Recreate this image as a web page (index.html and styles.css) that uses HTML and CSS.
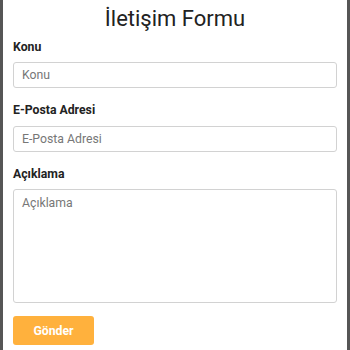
FILE: index.html
```html
<!DOCTYPE html>
<html lang="tr">
<head>
<meta charset="utf-8">
<link rel="stylesheet" href="styles.css">
</head>
<body>
<div class="page">
  <h1 class="title">İletişim Formu</h1>
  <form class="form">
    <label class="label" for="konu">Konu</label>
    <input class="field" id="konu" type="text" placeholder="Konu">
    <label class="label" for="email">E-Posta Adresi</label>
    <input class="field" id="email" type="email" placeholder="E-Posta Adresi">
    <label class="label" for="aciklama">Açıklama</label>
    <textarea class="field area" id="aciklama" placeholder="Açıklama"></textarea>
    <button class="btn" type="button">Gönder</button>
  </form>
</div>
</body>
</html>
```
FILE: styles.css
```css
html, body {
  margin: 0;
  padding: 0;
  background: #565656;
  height: 100%;
}
.page {
  margin: 0 3px;
  background: #fff;
  min-height: 100%;
  padding: 0 10px;
  box-sizing: border-box;
  font-family: Roboto, "Noto Sans", sans-serif;
  color: #222;
}
.title {
  margin: 0;
  padding-top: 3.5px;
  font-size: 22px;
  font-weight: 400;
  text-align: center;
  line-height: 30px;
  color: #222;
}
.form {
  display: flex;
  flex-direction: column;
  align-items: flex-start;
}
.label {
  font-size: 12.25px;
  font-weight: 700;
  line-height: 16px;
  margin-top: 5px;
  margin-bottom: 7.5px;
  color: #222;
}
.field {
  align-self: stretch;
  box-sizing: border-box;
  height: 26px;
  border: 1px solid #d2d2d2;
  border-radius: 3px;
  padding: 0 8px;
  font-family: Roboto, "Noto Sans", sans-serif;
  font-size: 12.25px;
  color: #333;
  margin-bottom: 9px;
  background: #fff;
}
.field::placeholder {
  color: #777;
}
.area {
  height: 114px;
  padding-top: 6px;
  resize: none;
  margin-bottom: 13px;
}
.btn {
  width: 81px;
  height: 29px;
  border: none;
  border-radius: 3px;
  background: #ffb13d;
  color: #fff;
  font-family: Roboto, "Noto Sans", sans-serif;
  font-size: 12.25px;
  font-weight: 700;
}
```
